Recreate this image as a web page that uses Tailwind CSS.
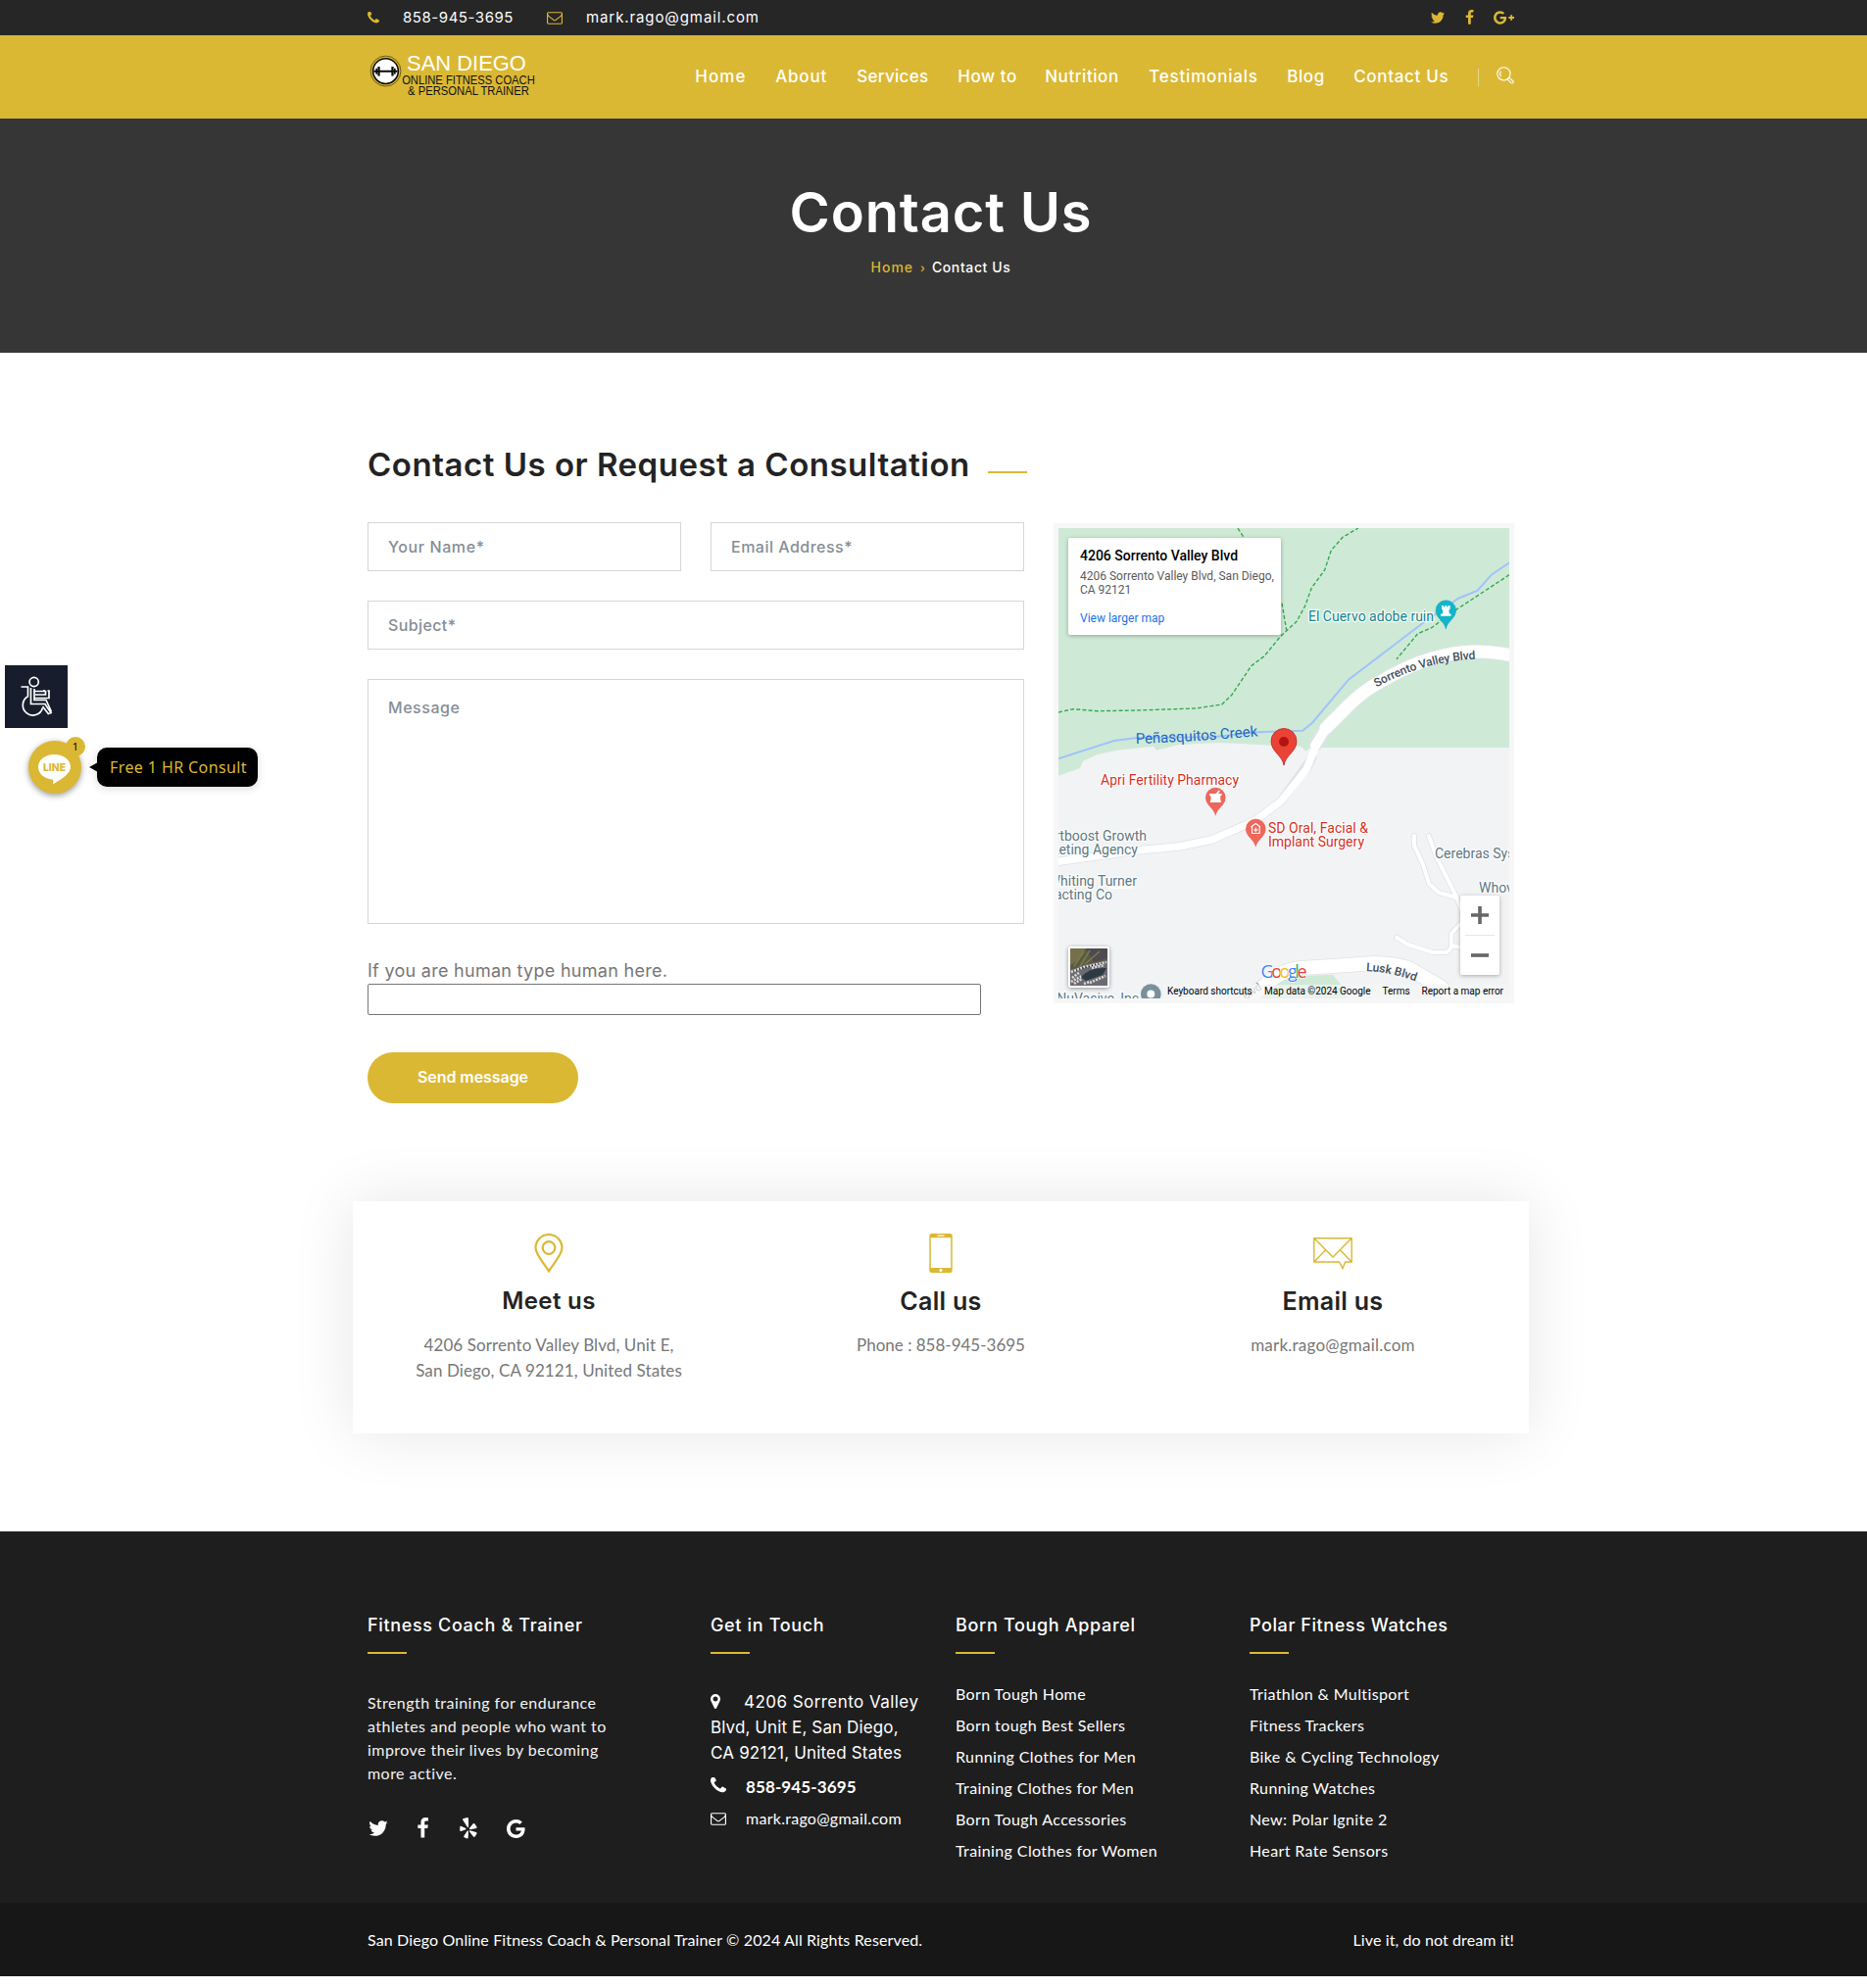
<!DOCTYPE html>
<html lang="en">
<head>
<meta charset="utf-8">
<title>Contact Us | San Diego Online Fitness Coach &amp; Personal Trainer</title>
<script src="https://cdn.jsdelivr.net/npm/@tailwindcss/browser@4"></script>
</head>
<body class="relative h-[2029px] overflow-hidden bg-white font-['Inter',sans-serif]">
<svg class="hidden">
  <symbol id="twitter" viewBox="0 0 1792 1792"><path d="M1684 408q-67 98-162 167 1 14 1 42 0 130-38 259.500t-115.500 248.500-184.500 210.500-258 146-323 54.500q-271 0-496-145 35 4 78 4 225 0 401-138-105-2-188-64.500t-114-159.500q33 5 61 5 43 0 85-11-112-23-185.500-111.500t-73.500-205.500v-4q68 38 146 41-66-44-105-115t-39-154q0-88 44-163 121 149 294.500 238.500t371.500 99.500q-8-38-8-74 0-134 94.500-228.500t228.500-94.500q140 0 236 102 109-21 205-78-37 115-142 178 93-10 186-50z"/></symbol>
  <symbol id="facebook" viewBox="400 0 1000 1792"><path d="M1343 12v264h-157q-86 0-116 36t-30 108v189h293l-39 296h-254v759h-306v-759h-255v-296h255v-218q0-186 104-288.500t277-102.500q147 0 228 12z"/></symbol>
  <symbol id="phone" viewBox="192 192 1408 1408"><path d="M1600 1240q0 27-10 70.500t-21 68.500q-21 50-122 106-94 51-186 51-27 0-53-3.500t-57.500-12.500-47-14.500-55.500-20.500-49-18q-98-35-175-83-127-79-264-216t-216-264q-48-77-83-175-3-9-18-49t-20.500-55.500-14.500-47-12.500-57.500-3.500-53q0-92 51-186 56-101 106-122 25-11 68.500-21t70.500-10q14 0 21 3 18 6 53 76 11 19 30 54t35 63.500 31 53.500q3 4 17.500 25t21.500 35.500 7 28.500q0 20-28.500 50t-62 55-62 53-28.500 46q0 9 5 22.500t8.500 20.500 14 24 11.500 19q76 137 174 235t235 174q2 1 19 11.500t24 14 20.500 8.500 22.500 5q18 0 46-28.500t53-62 55-62 50-28.500q14 0 28.500 7t35.500 21.500 25 17.500q25 15 53.500 31t63.500 35 54 30q70 35 76 53 3 7 3 21z"/></symbol>
  <symbol id="envelope" viewBox="0 256 1792 1408"><path d="M1664 1504v-768q-32 36-69 66-268 206-426 338-51 43-83 67t-86.500 48.500-102.500 24.500h-2q-48 0-102.500-24.500t-86.500-48.500-83-67q-158-132-426-338-37-30-69-66v768q0 13 9.500 22.500t22.500 9.500h1472q13 0 22.500-9.500t9.500-22.500zm0-1051v-24.500l-.5-13-3-12.500-5.500-9-9-7.500-14-2.500h-1472q-13 0-22.500 9.500t-9.500 22.500q0 168 147 284 193 152 401 317 6 5 35 29.500t46 37.500 44.500 31.500 50.500 27.500 43 9h2q20 0 43-9t50.500-27.500 44.500-31.500 46-37.500 35-29.500q208-165 401-317 54-43 100.500-115.500t46.500-131.500zm128-37v1088q0 66-47 113t-113 47h-1472q-66 0-113-47t-47-113v-1088q0-66 47-113t113-47h1472q66 0 113 47t47 113z"/></symbol>
  <symbol id="marker" viewBox="384 128 1024 1536"><path d="M1152 640q0-106-75-181t-181-75-181 75-75 181 75 181 181 75 181-75 75-181zm256 0q0 109-33 179l-364 774q-16 33-47.500 52t-67.500 19-67.500-19-46.500-52l-365-774q-33-70-33-179 0-212 150-362t362-150 362 150 150 362z"/></symbol>
  <symbol id="google" viewBox="128 128 1536 1536"><path d="M896 786h725q12 67 12 128 0 217-91 387.500t-259.500 266.500-386.500 96q-157 0-299-60.500t-245-163.500-163.500-245-60.500-299 60.500-299 163.500-245 245-163.500 299-60.500q300 0 515 201l-209 201q-123-119-306-119-129 0-238.500 65t-173.500 176.500-64 243.500 64 243.500 173.500 176.500 238.500 65q87 0 160-24t120-60 82-82 51.500-87 22.500-78h-436v-264z"/></symbol>
  <symbol id="gplus" viewBox="0 128 2304 1536"><path d="M1437 913q0 208-87 370.500t-248 254-369 91.500q-149 0-285-58t-234-156-156-234-58-285 58-285 156-234 234-156 285-58q286 0 491 192l-199 191q-117-113-292-113-123 0-227.500 62t-165.500 168.500-61 232.500 61 232.500 165.500 168.500 227.500 62q83 0 152.500-23t114.500-57.500 78.500-78.500 49-83 21.500-74h-416v-252h692q12 63 12 122zm867-122v210h-209v209h-210v-209h-209v-210h209v-209h210v209h209z"/></symbol>
  <symbol id="yelp" viewBox="0 0 18 22"><path d="M3.400 1.200 7.700 0Q9 0 9 1.200L9.100 9.400Q8.800 10.700 7.900 9.700L3.200 2.500Q2.700 1.500 3.400 1.200ZM1.300 8.700 6.200 11Q7 11.800 6.200 12.300L1.400 13.900Q.3 14 .2 13L.3 9.500Q.6 8.500 1.300 8.700ZM7.700 13.700Q8.700 12.900 8.900 14L8.700 20.600Q8.500 21.600 7.500 21.400L4.700 20.300Q3.800 19.800 4.300 19ZM10.700 13.200 16.900 15.100Q18 15.600 17.500 16.600L15.600 19.500Q14.800 20.300 14 19.500L10 14.500Q9.600 13.300 10.700 13.200ZM9.900 10.900 13.700 6.300Q14.700 5.600 15.500 6.600L17.600 9.800Q18 10.800 17 11.100L10.900 12.300Q9.700 12.200 9.900 10.900Z"/></symbol>
</svg>

<div class="w-[1920px]">
  <!-- Top bar -->
  <div class="h-9 bg-[#262626]">
    <div class="mx-auto flex h-full w-[1170px] items-center text-[15px] text-white">
      <svg class="size-3 fill-[#dbb833]"><use href="#phone"/></svg>
      <span class="ml-6 w-[147px] tracking-[0.55px]">858-945-3695</span>
      <svg class="h-[13px] w-4 fill-[#dbb833]"><use href="#envelope"/></svg>
      <span class="ml-6 tracking-[0.9px]">mark.rago@gmail.com</span>
      <div class="ml-auto flex items-center text-[#dbb833]">
        <svg class="size-[16px] fill-current"><use href="#twitter"/></svg>
        <svg class="ml-[20px] h-[16px] w-[9px] fill-current"><use href="#facebook"/></svg>
        <svg class="ml-[20px] h-[14px] w-[21px] fill-current"><use href="#gplus"/></svg>
      </div>
    </div>
  </div>

  <!-- Header -->
  <header class="h-[85px] bg-[#dbb833]">
    <div class="mx-auto flex h-full w-[1170px] items-center">
      <svg class="h-[85px] w-[180px] font-['Liberation_Sans',sans-serif]" viewBox="375 36 180 85">
        <circle cx="393.700" cy="72.500" r="15.600" fill="none" stroke="#4b3f12" stroke-width=".8"/>
        <circle cx="393.700" cy="72.500" r="13" fill="#fff" stroke="#0b0b0b" stroke-width="1.600"/>
        <path d="M381.500 71.800h24.400v2h-24.400zM383.500 69.700h1.600v6h-1.600zM385.500 68h2.300v9.400h-2.300zM399.600 68h2.300v9.400h-2.300zM402.300 69.700h1.600v6h-1.600z" fill="#0b0b0b"/>
        <text x="415.500" y="72" font-size="22" fill="#fff" textLength="123" lengthAdjust="spacingAndGlyphs">SAN DIEGO</text>
        <text x="410.500" y="86" font-size="12" fill="#111" textLength="137" lengthAdjust="spacingAndGlyphs">ONLINE FITNESS COACH</text>
        <text x="416.500" y="97" font-size="12" fill="#111" textLength="125" lengthAdjust="spacingAndGlyphs">&amp; PERSONAL TRAINER</text>
      </svg>
      <nav class="ml-[156px] flex text-[17px] font-medium whitespace-nowrap text-white">
        <a class="w-[82px] tracking-[1.1px]">Home</a>
        <a class="w-[83px] tracking-[0.79px]">About</a>
        <a class="w-[103px] tracking-[0.31px]">Services</a>
        <a class="w-[89px] tracking-[0.57px]">How to</a>
        <a class="w-[106px] tracking-[0.56px]">Nutrition</a>
        <a class="w-[141px] tracking-[0.8px]">Testimonials</a>
        <a class="w-[68px] tracking-[0.58px]">Blog</a>
        <a class="w-[127px] tracking-[0.68px]">Contact Us</a>
      </nav>
      <span class="h-[18px] w-px bg-[#e9d488]"></span>
      <svg class="mb-1 ml-[18px] size-[18px]" viewBox="0 0 18 18" fill="none" stroke="#fff" stroke-width="1.100">
        <circle cx="7.500" cy="7.300" r="6.700"/><path d="M4.600 10.200Q2.800 7.500 4.600 4.600M11.200 12.800l1.800-1.600 4 3.600q.9 1.200 0 1.900-1 .7-2 0z"/>
      </svg>
    </div>
  </header>

  <!-- Page banner -->
  <section class="h-[239px] bg-[#363636] pt-16 text-center text-white">
    <h1 class="text-[56px] leading-[64px] font-semibold tracking-[0.86px]">Contact Us</h1>
    <p class="mt-[14px] flex justify-center text-sm leading-5 font-medium">
      <span class="tracking-[1px] text-[#dbb833]">Home</span>
      <span class="mx-[7px] pt-px text-xs leading-5 text-[#dbb833]">›</span>
      <span class="tracking-[0.62px]">Contact Us</span>
    </p>
  </section>

  <main class="mx-auto w-[1170px] pt-[94px]">
    <h2 class="flex items-end text-[33px] leading-10 font-semibold tracking-[0.51px] text-[#232323]">Contact Us or Request a Consultation<span class="mb-[11px] ml-[18px] h-[2px] w-10 bg-[#dbb833]"></span></h2>
    <div class="mt-[39px] flex">
      <form class="w-[670px]">
        <div class="flex gap-[30px]">
          <input placeholder="Your Name*" class="h-[50px] w-80 border border-[#d6d6d6] px-5 pb-px text-base font-medium tracking-[0.6px] placeholder-[#868e96]">
          <input placeholder="Email Address*" class="h-[50px] w-80 border border-[#d6d6d6] px-5 pb-px text-base font-medium tracking-[0.49px] placeholder-[#868e96]">
        </div>
        <input placeholder="Subject*" class="mt-[30px] block h-[50px] w-full border border-[#d6d6d6] px-5 pb-px text-base font-medium tracking-[0.39px] placeholder-[#868e96]">
        <textarea placeholder="Message" class="mt-[30px] block h-[250px] w-full resize-none border border-[#d6d6d6] px-5 py-4 text-base leading-6 font-medium tracking-[0.56px] placeholder-[#868e96]"></textarea>
        <label class="mt-[35px] block text-[18px] leading-[26px] tracking-[0.28px] text-[#777]">If you are human type human here.</label>
        <input class="block h-8 w-[626px] rounded-[2px] border border-[#767676]">
        <button type="button" class="mt-[38px] block h-[52px] w-[215px] rounded-full bg-[#dbb833] pb-[2px] text-base font-semibold tracking-[-0.07px] text-white">Send message</button>
      </form>

      <!-- Map -->
      <div class="mt-px ml-[30px] h-[490px] w-[470px] border-5 border-[#f7f7f7]">
        <div class="relative h-[480px] w-[460px] overflow-hidden font-['Roboto',sans-serif]">
          <svg class="block h-[480px] w-[460px]" viewBox="0 0 460 480" fill="none">
            <rect width="460" height="480" fill="#f1f3f5"/>
            <path fill="#ceead6" d="M0 0H460V224H257L253 227.700 247 222.700 220 221.700 163 219 123 221 100 226.700 97 222.700 60 226.700 40 231 25 237.700 22 245 0 252.700Z"/>
            <path fill="#ceead6" d="M205 480 220 464 247 457 280 455.700 288 466 294 480Z"/>
            <path stroke="#a1c2fa" stroke-width="2" d="M0 235.300 56.700 217 80 214 157 213.300 203 208.300 249 206.700 259 198.700 296 154.700 373 96 408 71.700 427.700 63.700 441.700 47.700 460 35.300"/>
            <g stroke="#34a853" stroke-width="1.400" stroke-dasharray="4 2.200">
              <path d="M0 188 15 184.700 40 186.700 80 186 140 184 166.700 180 177 170 196.700 140.700 210 130.700 226.700 110.300 243 95.300 251.700 79.300 258.300 61 271.700 42.700 278.300 22.700 290 9.300 306 0"/>
              <path d="M183 0 190 11M228 76.700 232.700 104.300"/>
              <path d="M460 47.700 406.700 82.700 380.700 101.700 366.700 107.700 345 133.700"/>
            </g>
            <g stroke-linejoin="round" stroke-linecap="round">
              <g stroke="#dfe2e6">
                <path stroke-width="5.500" d="M363 314V324L371.700 342.700 378 362.700 388 372 405 376.700M377.700 314 386.700 337.700 405 374 411.700 391 413 401 401 413.700V427.700L396.700 432.700 381.700 433 356.700 425 345 417.700M401 426 411 428"/>
                <path stroke-width="9" d="M253 246 259 234 226.700 279 200 299 156.700 318 123 325 80 329 23 337 -5 341"/>
                <path stroke-width="15.500" d="M190 484 217 461Q232 450 247 449L280 447 323 444Q345 445 357 449L390 468 407 484"/>
                <path stroke-width="14.500" d="M465 130.500Q436 124 410 127 370 132 330 156 312 165 295 182L273 204 263 220"/>
              </g>
              <g stroke="#fff">
                <path stroke-width="4" d="M363 314V324L371.700 342.700 378 362.700 388 372 405 376.700M377.700 314 386.700 337.700 405 374 411.700 391 413 401 401 413.700V427.700L396.700 432.700 381.700 433 356.700 425 345 417.700M401 426 411 428"/>
                <path stroke-width="3" d="M53 367 75 366"/>
                <path stroke-width="7.500" d="M263 222 253 246 226.700 279 200 299 156.700 318 123 325 80 329 23 337 -5 341"/>
                <path stroke-width="14" d="M190 484 217 461Q232 450 247 449L280 447 323 444Q345 445 357 449L390 468 407 484"/>
                <path stroke-width="13" d="M465 130.500Q436 124 410 127 370 132 330 156 312 165 295 182L273 204"/>
                <path stroke-width="10" d="M273 204 262 222"/>
              </g>
            </g>
            <g font-size="14" stroke="#fff" stroke-width="2.500" stroke-opacity=".85" paint-order="stroke" stroke-linejoin="round">
              <text x="255" y="94.500" fill="#12858d" textLength="128">El Cuervo adobe ruin</text>
              <text x="43" y="261.500" fill="#d93025" textLength="141">Apri Fertility Pharmacy</text>
              <text x="214" y="310.500" fill="#d93025" textLength="102">SD Oral, Facial &amp;</text>
              <text x="214" y="324.500" fill="#d93025" textLength="98">Implant Surgery</text>
              <g fill="#5f7883">
                <text x="90" y="318.500" text-anchor="end">artboost Growth</text>
                <text x="81" y="332.500" text-anchor="end">keting Agency</text>
                <text x="80" y="364.500" text-anchor="end">Whiting Turner</text>
                <text x="55" y="378.500" text-anchor="end">racting Co</text>
                <text x="384" y="336.500">Cerebras Systems</text>
                <text x="429" y="371.500">Whova</text>
                <text x="82" y="485" text-anchor="end">NuVasive, Inc</text>
              </g>
            </g>
            <path id="creek" d="M79 220Q140 218 206 212"/>
            <text font-size="15" fill="#1f66c4"><textPath href="#creek" textLength="125">Peñasquitos Creek</textPath></text>
            <path id="svb" d="M324.500 162.500Q374 135 430 133.500"/>
            <text font-size="12" font-weight="500" fill="#444f59"><textPath href="#svb" textLength="106">Sorrento Valley Blvd</textPath></text>
            <path id="lusk" d="M314 452Q338 453 366 463"/>
            <text font-size="12" font-weight="500" fill="#444f59"><textPath href="#lusk">Lusk Blvd</textPath></text>
            <text x="191" y="482" font-size="11" fill="#777d82" transform="rotate(-35 191 482)">Blvd</text>
            <path d="M230 242C228.500 232 217 228 217 217.500A13 13 0 0 1 243 217.500C243 228 231.500 232 230 242Z" fill="#ea4335" stroke="#c5221f" stroke-width=".8"/>
            <circle cx="230" cy="218" r="5" fill="#b31412"/>
            <path d="M160.300 294C159 286 150 283 150 275A10.300 10.300 0 0 1 170.600 275C170.600 283 161.600 286 160.300 294Z" fill="#ee675c"/>
            <path d="M154 271H160.500L163.600 267.500 164.900 268.500 163 271H166.600V273H165.500Q164.500 275.500 166 280H154.800Q156.300 275.500 155.200 273H154Z" fill="#fff"/>
            <path d="M201.300 326C200 318 191 315 191 307A10.300 10.300 0 0 1 211.600 307C211.600 315 202.600 318 201.300 326Z" fill="#ee675c"/>
            <path d="M196.500 305 201.300 301.500 206 305M197.500 304.500V311.500H205.200V304.500M201.300 305.500V310.300M199 308H203.700" stroke="#fff" stroke-width="1.100"/>
            <path d="M395.300 103C394 95 385 92 385 84A10.300 10.300 0 0 1 405.600 84C405.600 92 396.600 95 395.300 103Z" fill="#12b5cb" stroke="#129eaf" stroke-width=".5"/>
            <path d="M391 79H393V80.500H394.400V79H396.200V80.500H397.600V79H399.600V82.500L398.300 84 398.800 87.500H400.500V89.700H390V87.500H391.800L392.300 84 391 82.500Z" fill="#fff"/>
            <circle cx="94.300" cy="475.500" r="10.300" fill="#78909c"/><circle cx="94.300" cy="475.500" r="4" fill="#fff"/>
            <rect x="106" y="466" width="354" height="14" fill="#f5f5f5" fill-opacity=".7"/>
            <text y="458.500" font-size="18" font-weight="500" font-family="Open Sans" textLength="47" x="206.500" stroke="#fff" stroke-width="1.500" stroke-opacity=".8" paint-order="stroke"><tspan fill="#4285f4">G</tspan><tspan fill="#ea4335">o</tspan><tspan fill="#fbbc04">o</tspan><tspan fill="#4285f4">g</tspan><tspan fill="#34a853">l</tspan><tspan fill="#ea4335">e</tspan></text>
            <g font-size="10" fill="#000">
              <text x="111" y="475.500">Keyboard shortcuts</text>
              <text x="210" y="475.500" textLength="108.500">Map data ©2024 Google</text>
              <text x="330.500" y="475.500">Terms</text>
              <text x="370.500" y="475.500">Report a map error</text>
            </g>
          </svg>
          <div class="absolute top-[10px] left-[10px] h-[99px] w-[217px] rounded-[2px] bg-white pt-[9px] pl-3 text-xs leading-[14px] whitespace-nowrap text-[#5b5b5b] shadow-[0_1px_4px_rgba(0,0,0,0.3)]">
            <div class="text-sm leading-[18px] font-medium text-black">4206 Sorrento Valley Blvd</div>
            <div class="mt-[5px]">4206 Sorrento Valley Blvd, San Diego,<br>CA 92121</div>
            <a class="mt-[15px] block text-[#1a73e8]">View larger map</a>
          </div>
          <div class="absolute top-[427px] left-[10px] size-[42px] overflow-hidden rounded-[3px] border-2 border-white shadow-[0_1px_4px_rgba(0,0,0,0.4)]">
            <svg class="size-[38px]" viewBox="0 0 38 38">
              <rect width="38" height="38" fill="#5a5b43"/>
              <path d="M0 0H16L8 12 0 17Z" fill="#76704a"/><path d="M16 0H38V10L24 14Z" fill="#4d4a52"/>
              <path d="M4 18 14 3M9 20 20 2M15 16 30 3" stroke="#7d7a4d" stroke-width="1.500"/>
              <path d="M0 22 14 17 38 12V38H0Z" fill="#6b6a72"/>
              <path d="M1 24 14 19 37 14M2 30 10 24M1 34 12 28M20 35 36 28M4 36 12 31M14 36 20 34M22 20 35 17" stroke="#dcd9d8" stroke-width="2.600" stroke-dasharray="2 1.300"/>
              <path d="M11 29Q20 19 37 20L33 27 16 33Z" fill="#2d3944"/>
            </svg>
          </div>
          <div class="absolute top-[375px] left-[410px] flex h-[81px] w-10 flex-col items-center justify-between rounded-[2px] bg-white shadow-[0_1px_4px_rgba(0,0,0,0.3)]">
            <svg class="h-10 w-10" viewBox="0 0 40 40"><path d="M11 18.200h18v3.600H11zM18.200 11h3.600v18h-3.600z" fill="#666"/></svg>
            <span class="h-px w-[30px] bg-[#e6e6e6]"></span>
            <svg class="h-10 w-10" viewBox="0 0 40 40"><path d="M11 18.200h18v3.600H11z" fill="#666"/></svg>
          </div>
        </div>
      </div>
    </div>
  </main>

  <!-- Contact cards -->
  <section class="mx-auto mt-[100px] grid h-[237px] w-[1200px] grid-cols-3 bg-white pt-[33px] text-center shadow-[0_0_60px_rgba(0,0,0,0.1)]">
    <div>
      <svg class="mx-auto size-10" viewBox="0 0 40 40" fill="none" stroke="#dbb833" stroke-width="2.200"><path d="M20 38.300C15.500 31 6.500 21.500 6.500 14.500A13.500 13.500 0 0 1 33.500 14.500C33.500 21.500 24.500 31 20 38.300Z"/><circle cx="20" cy="14.500" r="6.300"/></svg>
      <h3 class="mt-[13px] text-2xl leading-8 font-semibold tracking-[0.35px] text-[#232323]">Meet us</h3>
      <p class="mt-4 font-['Lato',sans-serif] text-[17px] leading-[26px] tracking-[0.1px] text-[#777]">4206 Sorrento Valley Blvd, Unit E,<br>San Diego, CA 92121, United States</p>
    </div>
    <div>
      <svg class="mx-auto size-10" viewBox="0 0 40 40"><path fill="#dbb833" fill-rule="evenodd" d="M10.500 0h19q2.200 0 2.200 2.200v35.600q0 2.200-2.200 2.200h-19q-2.200 0-2.200-2.200V2.200Q8.300 0 10.500 0ZM9.800 4.300V35H30.200V4.300ZM16.500 1.600v1.200h7V1.600ZM20 35.800a1.600 1.600 0 1 0 .01 0Z"/></svg>
      <h3 class="mt-[13px] text-[25px] leading-8 font-semibold tracking-[0.3px] text-[#232323]">Call us</h3>
      <p class="mt-4 font-['Lato',sans-serif] text-[17px] leading-[26px] text-[#777]">Phone : 858-945-3695</p>
    </div>
    <div>
      <svg class="mx-auto size-10" viewBox="0 0 40 40" fill="none" stroke="#dbb833" stroke-width="1.400"><path d="M.8 4.700H39.200V29H32.600L30 35.500 26.500 29H.8ZM.8 4.700 20 24 39.200 4.700M.8 29 12.600 16.800M39.200 29 27.400 16.800"/></svg>
      <h3 class="mt-[13px] text-[25px] leading-8 font-semibold tracking-[0.3px] text-[#232323]">Email us</h3>
      <p class="mt-4 font-['Lato',sans-serif] text-[17px] leading-[26px] tracking-[0.23px] text-[#777]">mark.rago@gmail.com</p>
    </div>
  </section>

  <!-- Footer -->
  <footer class="mt-[100px] bg-[#1e1e1e] text-white">
    <div class="mx-auto grid h-[379px] w-[1170px] grid-cols-[350px_250px_300px_270px] pt-[82px]">
      <div>
        <h4 class="text-lg leading-7 font-medium tracking-[0.65px]">Fitness Coach &amp; Trainer</h4>
        <div class="mt-[13px] h-[2px] w-10 bg-[#dbb833]"></div>
        <p class="mt-[38px] font-['Lato',sans-serif] text-base leading-6 tracking-[0.46px] text-[#f2f2f2]">Strength training for endurance<br>athletes and people who want to<br>improve their lives by becoming<br>more active.</p>
        <div class="mt-[33px] flex items-center">
          <svg class="size-[22px] fill-white"><use href="#twitter"/></svg>
          <svg class="ml-7 h-[22px] w-[13px] fill-white"><use href="#facebook"/></svg>
          <svg class="ml-[31px] h-[22px] w-[18px] fill-white"><use href="#yelp"/></svg>
          <svg class="ml-[30px] size-[19px] fill-white"><use href="#google"/></svg>
        </div>
      </div>
      <div>
        <h4 class="text-lg leading-7 font-medium tracking-[0.65px]">Get in Touch</h4>
        <div class="mt-[13px] h-[2px] w-10 bg-[#dbb833]"></div>
        <p class="mt-9 text-[17px] leading-[26px] whitespace-nowrap"><svg class="mr-[24px] inline h-[15px] w-[10px] fill-white align-[-1px]"><use href="#marker"/></svg><span class="tracking-[0.45px]">4206 Sorrento Valley</span><br><span class="tracking-[0.12px]">Blvd, Unit E, San Diego,</span><br><span class="tracking-[0.18px]">CA 92121, United States</span></p>
        <div class="mt-1.5 flex h-8 items-center font-['Lato',sans-serif] text-[17px] font-bold tracking-[0.11px]"><svg class="mr-5 mb-1 size-4 fill-white"><use href="#phone"/></svg>858-945-3695</div>
        <div class="flex h-8 items-center font-['Lato',sans-serif] text-base tracking-[0.27px]"><svg class="mr-5 h-[13px] w-4 fill-white"><use href="#envelope"/></svg>mark.rago@gmail.com</div>
      </div>
      <div>
        <h4 class="text-lg leading-7 font-medium tracking-[0.68px]">Born Tough Apparel</h4>
        <div class="mt-[13px] h-[2px] w-10 bg-[#dbb833]"></div>
        <ul class="mt-[25px] font-['Lato',sans-serif] text-base leading-8 tracking-[0.39px]">
          <li>Born Tough Home</li><li>Born tough Best Sellers</li><li>Running Clothes for Men</li><li>Training Clothes for Men</li><li>Born Tough Accessories</li><li>Training Clothes for Women</li>
        </ul>
      </div>
      <div>
        <h4 class="text-lg leading-7 font-medium tracking-[0.58px]">Polar Fitness Watches</h4>
        <div class="mt-[13px] h-[2px] w-10 bg-[#dbb833]"></div>
        <ul class="mt-[25px] font-['Lato',sans-serif] text-base leading-8 tracking-[0.38px]">
          <li>Triathlon &amp; Multisport</li><li>Fitness Trackers</li><li>Bike &amp; Cycling Technology</li><li>Running Watches</li><li>New: Polar Ignite 2</li><li>Heart Rate Sensors</li>
        </ul>
      </div>
    </div>
    <div class="h-[75px] bg-[#171717]">
      <div class="mx-auto flex h-full w-[1170px] items-center justify-between font-['Lato',sans-serif] text-base">
        <span class="tracking-[0.135px]">San Diego Online Fitness Coach &amp; Personal Trainer © 2024 All Rights Reserved.</span>
        <span class="tracking-[0.11px]">Live it, do not dream it!</span>
      </div>
    </div>
  </footer>
</div>

<!-- Floating widgets -->
<div class="absolute top-[679px] left-[5px] size-16 bg-[#171d2d]">
  <svg class="size-16" viewBox="0 0 64 64" fill="none" stroke="#fff" stroke-width="1.700">
    <circle cx="29.700" cy="17" r="4.600"/>
    <path d="M16.500 22H23.500V31.500M26.500 23V39.500H41L47 48.500 44.300 49.500 38.500 42M30 24V26.500H40V25M43.500 26H45V33.500H30.500M30 24V35.500H42L47.500 47.500M31 30H41.500V26.500H31"/>
    <path d="M24 31.500A10.300 10.300 0 1 0 38.500 43.500"/>
  </svg>
</div>
<div class="absolute top-[756px] left-[29px] flex size-[54px] items-center justify-center rounded-full bg-[#dbb833] shadow-[0_2px_6px_rgba(0,0,0,0.4)]">
  <svg class="size-[54px]" viewBox="0 0 54 54"><path d="M26.500 14C36 14 43 19.500 43 26.800 43 33 36 38 25 44.500 25.500 42 25.500 40.500 24.800 39.700 16 38.700 10 33.700 10 26.800 10 19.500 17 14 26.500 14Z" fill="#fff"/><text x="15" y="31" font-size="10.500" font-weight="800" fill="#dbb833" textLength="23" lengthAdjust="spacingAndGlyphs">LINE</text></svg>
</div>
<div class="absolute top-[752px] left-[67px] flex size-5 items-center justify-center rounded-full bg-[#dbb833] font-['Noto_Sans',sans-serif] text-[11px] text-black">1</div>
<div class="absolute top-[763px] left-[99px] flex h-10 w-[164px] items-center justify-center rounded-[10px] bg-black pb-px pl-[2px] font-['Noto_Sans',sans-serif] text-[16px] tracking-[0.4px] whitespace-nowrap text-[#dbb833] shadow-[0_2px_8px_rgba(0,0,0,0.15)]">Free 1 HR Consult</div>
<svg class="absolute top-[778px] left-[91px] h-[10px] w-[9px]" viewBox="0 0 9 10"><path d="M0 5 9 0V10Z"/></svg>
</body>
</html>
